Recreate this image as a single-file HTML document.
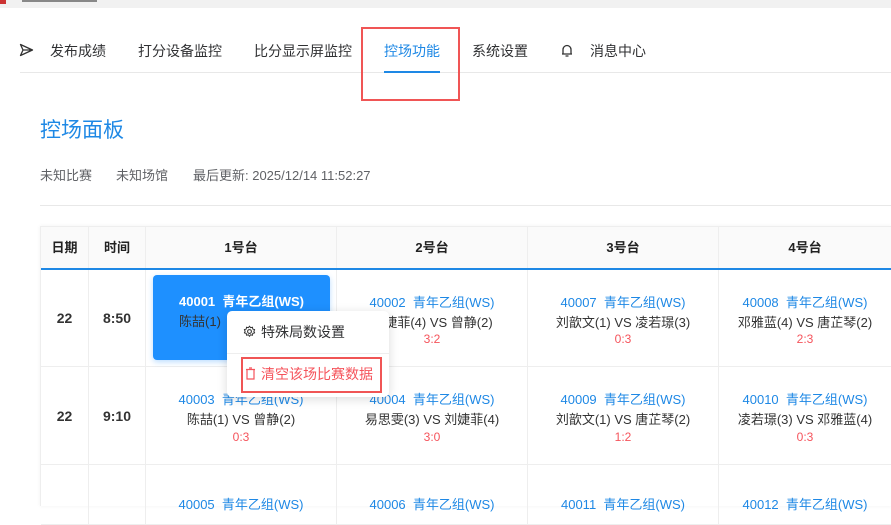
<!DOCTYPE html>
<html><head><meta charset="utf-8"><style>
*{margin:0;padding:0;box-sizing:border-box}
body{width:891px;height:506px;overflow:hidden;background:#fff;font-family:"Liberation Sans","Noto Sans CJK SC",sans-serif;color:#333;position:relative}
.a{position:absolute;white-space:nowrap}
.nav{font-size:14px;top:41px;color:#303133}
.th{position:absolute;top:227px;height:41px;background:#fafafa;font-size:13px;font-weight:bold;text-align:center;line-height:41px;color:#222;border-right:1px solid #eee}
.cell{position:absolute;text-align:center;font-size:13px;border-right:1px solid #eee;border-bottom:1px solid #eee}
.d{font-size:14px;font-weight:bold;color:#333}
.m{position:absolute;left:0;right:0;text-align:center}
.b{color:#1e88e5}.r{color:#f5545c;font-size:12px}
</style></head><body>
<div class="a" style="left:0;top:0;width:891px;height:8px;background:#f1f1f1"></div>
<div class="a" style="left:0;top:0;width:6px;height:4px;background:#c33"></div>
<div class="a" style="left:22px;top:0;width:75px;height:2px;background:#888"></div>

<svg class="a" style="left:19px;top:43px" width="15" height="14" viewBox="0 0 15 14"><path d="M1.5 1.5 L13.5 7 L1.5 12.5 L4 7 Z M4 7 H13.5" fill="none" stroke="#333" stroke-width="1.3" stroke-linejoin="round"/></svg>
<div class="a nav" style="left:50px">发布成绩</div>
<div class="a nav" style="left:138px">打分设备监控</div>
<div class="a nav" style="left:254px">比分显示屏监控</div>
<div class="a nav" style="left:384px;color:#1e88e5">控场功能</div>
<div class="a nav" style="left:472px">系统设置</div>
<svg class="a" style="left:561px;top:43px" width="12" height="15" viewBox="0 0 12 15"><path d="M2 11 V6.5 A4 4 0 0 1 10 6.5 V11 H1 H11 M4.5 13 H7.5" fill="none" stroke="#333" stroke-width="1.3"/></svg>
<div class="a nav" style="left:590px">消息中心</div>
<div class="a" style="left:20px;top:72px;width:871px;height:1px;background:#e8e8e8"></div>
<div class="a" style="left:384px;top:71px;width:56px;height:2px;background:#1e88e5"></div>
<div class="a" style="left:361px;top:27px;width:99px;height:74px;border:2px solid #f05555"></div>

<div class="a" style="left:40px;top:114px;font-size:21px;color:#1e88e5">控场面板</div>
<div class="a" style="left:40px;top:165px;font-size:13px;color:#606266">未知比赛</div>
<div class="a" style="left:116px;top:165px;font-size:13px;color:#606266">未知场馆</div>
<div class="a" style="left:193px;top:165px;font-size:13px;color:#606266">最后更新: 2025/12/14 11:52:27</div>
<div class="a" style="left:40px;top:205px;width:851px;height:1px;background:#e8e8e8"></div>

<div class="a" style="left:40px;top:226px;width:851px;height:280px;border-left:1px solid #eee;border-top:1px solid #eee;box-shadow:0 0 4px rgba(0,0,0,.06)"></div>
<div class="th" style="left:41px;width:48px">日期</div>
<div class="th" style="left:89px;width:57px">时间</div>
<div class="th" style="left:146px;width:191px">1号台</div>
<div class="th" style="left:337px;width:191px">2号台</div>
<div class="th" style="left:528px;width:191px">3号台</div>
<div class="th" style="left:719px;width:172px;border-right:none">4号台</div>
<div class="a" style="left:41px;top:268px;width:850px;height:2px;background:#1e88e5"></div>

<div class="cell d" style="left:41px;top:270px;width:48px;height:97px;line-height:97px">22</div>
<div class="cell d" style="left:89px;top:270px;width:57px;height:97px;line-height:97px">8:50</div>
<div class="cell" style="left:146px;top:270px;width:191px;height:97px"></div>
<div class="cell" style="left:337px;top:270px;width:191px;height:97px"><div class="m b" style="top:22px">40002 &nbsp;青年乙组(WS)</div><div class="m" style="top:42px">刘婕菲(4) VS 曾静(2)</div><div class="m r" style="top:62px">3:2</div></div>
<div class="cell" style="left:528px;top:270px;width:191px;height:97px"><div class="m b" style="top:22px">40007 &nbsp;青年乙组(WS)</div><div class="m" style="top:42px">刘歆文(1) VS 凌若璟(3)</div><div class="m r" style="top:62px">0:3</div></div>
<div class="cell" style="left:719px;top:270px;width:172px;height:97px;border-right:none"><div class="m b" style="top:22px">40008 &nbsp;青年乙组(WS)</div><div class="m" style="top:42px">邓雅蓝(4) VS 唐芷琴(2)</div><div class="m r" style="top:62px">2:3</div></div>

<div class="cell d" style="left:41px;top:367px;width:48px;height:98px;line-height:98px">22</div>
<div class="cell d" style="left:89px;top:367px;width:57px;height:98px;line-height:98px">9:10</div>
<div class="cell" style="left:146px;top:367px;width:191px;height:98px"><div class="m b" style="top:22px">40003 &nbsp;青年乙组(WS)</div><div class="m" style="top:42px">陈喆(1) VS 曾静(2)</div><div class="m r" style="top:63px">0:3</div></div>
<div class="cell" style="left:337px;top:367px;width:191px;height:98px"><div class="m b" style="top:22px">40004 &nbsp;青年乙组(WS)</div><div class="m" style="top:42px">易思雯(3) VS 刘婕菲(4)</div><div class="m r" style="top:63px">3:0</div></div>
<div class="cell" style="left:528px;top:367px;width:191px;height:98px"><div class="m b" style="top:22px">40009 &nbsp;青年乙组(WS)</div><div class="m" style="top:42px">刘歆文(1) VS 唐芷琴(2)</div><div class="m r" style="top:63px">1:2</div></div>
<div class="cell" style="left:719px;top:367px;width:172px;height:98px;border-right:none"><div class="m b" style="top:22px">40010 &nbsp;青年乙组(WS)</div><div class="m" style="top:42px">凌若璟(3) VS 邓雅蓝(4)</div><div class="m r" style="top:63px">0:3</div></div>

<div class="cell" style="left:41px;top:465px;width:48px;height:60px"></div>
<div class="cell" style="left:89px;top:465px;width:57px;height:60px"></div>
<div class="cell" style="left:146px;top:465px;width:191px;height:60px"><div class="m b" style="top:29px">40005 &nbsp;青年乙组(WS)</div></div>
<div class="cell" style="left:337px;top:465px;width:191px;height:60px"><div class="m b" style="top:29px">40006 &nbsp;青年乙组(WS)</div></div>
<div class="cell" style="left:528px;top:465px;width:191px;height:60px"><div class="m b" style="top:29px">40011 &nbsp;青年乙组(WS)</div></div>
<div class="cell" style="left:719px;top:465px;width:172px;height:60px;border-right:none"><div class="m b" style="top:29px">40012 &nbsp;青年乙组(WS)</div></div>

<div class="a" style="left:153px;top:275px;width:177px;height:85px;background:#1e90ff;border-radius:4px;box-shadow:0 2px 6px rgba(30,144,255,.3);font-size:13px">
<div class="m" style="top:16px;color:#fff;font-weight:bold">40001 &nbsp;青年乙组(WS)</div>
<div class="m" style="top:36px;color:#333;left:-83px">陈喆(1)</div>
</div>

<div class="a" style="left:227px;top:311px;width:162px;height:86px;background:#fff;border-radius:5px;box-shadow:0 2px 10px rgba(0,0,0,.15)"></div>
<svg class="a" style="left:243px;top:325px" width="13" height="13" viewBox="0 0 24 24"><circle cx="12" cy="12" r="3.5" fill="none" stroke="#333" stroke-width="2"/><path d="M12 2l2 3 3.5-1 .5 3.5 3.5 1-1.5 3 1.5 3-3.5 1-.5 3.5-3.5-1-2 3-2-3-3.5 1-.5-3.5-3.5-1 1.5-3-1.5-3 3.5-1 .5-3.5 3.5 1z" fill="none" stroke="#333" stroke-width="1.8" stroke-linejoin="round"/></svg>
<div class="a" style="left:261px;top:322px;font-size:14px;color:#303133">特殊局数设置</div>
<div class="a" style="left:227px;top:353px;width:162px;height:1px;background:#eee"></div>
<svg class="a" style="left:245px;top:367px" width="11" height="13" viewBox="0 0 11 13"><path d="M1 2.5 H10 M2 2.5 V12 H9 V2.5 M4 1 H7" fill="none" stroke="#f5545c" stroke-width="1.2"/></svg>
<div class="a" style="left:261px;top:364px;font-size:14px;color:#f5545c">清空该场比赛数据</div>
<div class="a" style="left:241px;top:357px;width:141px;height:36px;border:2px solid #f05555"></div>
</body></html>
